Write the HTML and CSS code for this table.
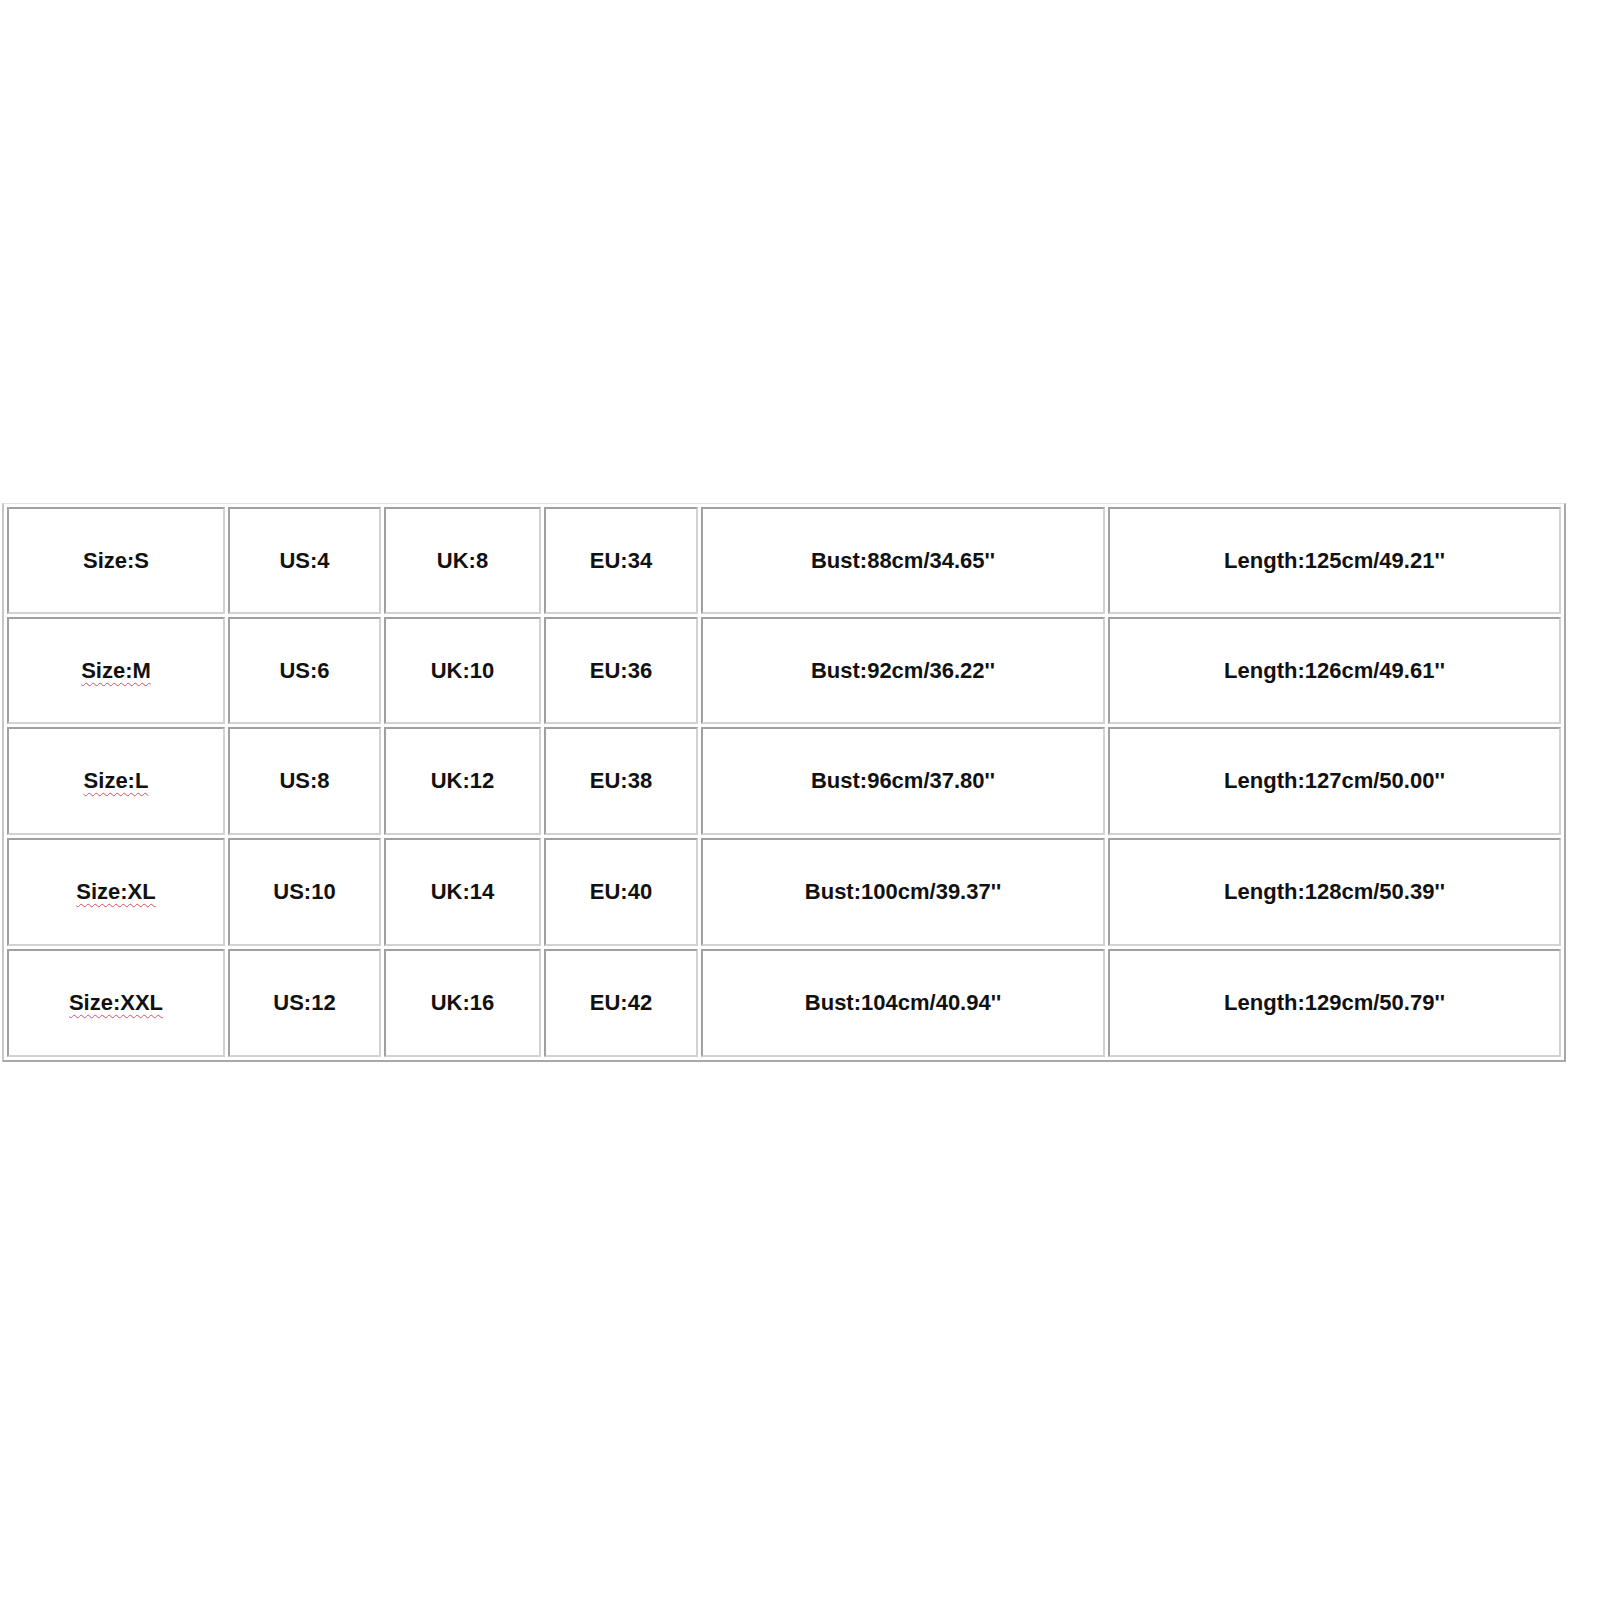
FILE: index.html
```html
<!DOCTYPE html>
<html>
<head>
<meta charset="utf-8">
<link rel="stylesheet" href="styles.css">
</head>
<body>
<table class="sizes">
  <colgroup>
    <col class="c1"><col class="c2"><col class="c3"><col class="c4"><col class="c5"><col class="c6">
  </colgroup>
  <tr class="r1">
    <td>Size:S</td><td>US:4</td><td>UK:8</td><td>EU:34</td><td>Bust:88cm/34.65''</td><td>Length:125cm/49.21''</td>
  </tr>
  <tr class="r2">
    <td><span class="spell">Size:M</span></td><td>US:6</td><td>UK:10</td><td>EU:36</td><td>Bust:92cm/36.22''</td><td>Length:126cm/49.61''</td>
  </tr>
  <tr class="r3">
    <td><span class="spell">Size:L</span></td><td>US:8</td><td>UK:12</td><td>EU:38</td><td>Bust:96cm/37.80''</td><td>Length:127cm/50.00''</td>
  </tr>
  <tr class="r4">
    <td><span class="spell">Size:XL</span></td><td>US:10</td><td>UK:14</td><td>EU:40</td><td>Bust:100cm/39.37''</td><td>Length:128cm/50.39''</td>
  </tr>
  <tr class="r5">
    <td><span class="spell">Size:XXL</span></td><td>US:12</td><td>UK:16</td><td>EU:42</td><td>Bust:104cm/40.94''</td><td>Length:129cm/50.79''</td>
  </tr>
</table>
</body>
</html>
```
FILE: styles.css
```css
html, body {
  margin: 0;
  padding: 0;
  background: #ffffff;
}

.sizes {
  margin: 503px 0 0 2px;
  border-collapse: separate;
  border-spacing: 3px;
  table-layout: fixed;
  width: 1562px;
  border-top: 1px solid #e2e2e2;
  border-left: 2px solid #c6c6c6;
  border-right: 2px solid #a8a8a8;
  border-bottom: 2px solid #a8a8a8;
  font-family: "Liberation Sans", Arial, sans-serif;
  font-weight: bold;
  font-size: 22px;
  color: #111111;
}

.c1 { width: 218px; }
.c2 { width: 153px; }
.c3 { width: 157px; }
.c4 { width: 154px; }
.c5 { width: 404px; }
.c6 { width: 453px; }

.sizes td {
  box-sizing: border-box;
  padding: 0;
  text-align: center;
  vertical-align: middle;
  border-top: 2px solid #a0a0a0;
  border-left: 2px solid #a0a0a0;
  border-bottom: 2px solid #d2d2d2;
  border-right: 2px solid #d2d2d2;
}

.r1 td, .r2 td { height: 107px; }
.r3 td, .r4 td, .r5 td { height: 108px; }

.spell {
  text-decoration-line: underline;
  text-decoration-style: wavy;
  text-decoration-color: #d0506a;
  text-decoration-thickness: 1px;
  text-underline-offset: 4px;
}
```
